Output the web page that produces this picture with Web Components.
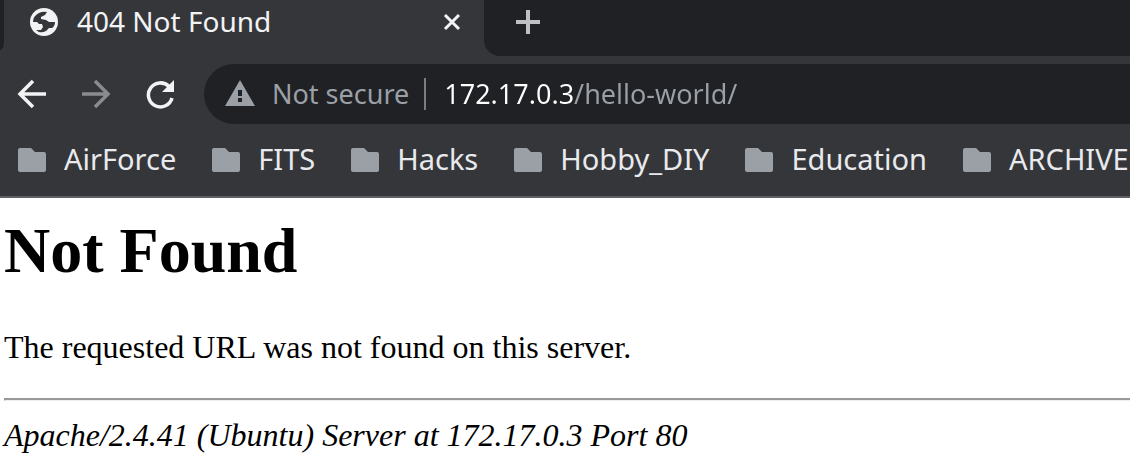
<!DOCTYPE html>
<html lang="en"><head><meta charset="utf-8"><title>404 Not Found</title>
<style>body{margin:0;background:#fff;font-family:"Noto Sans",sans-serif}</style></head>
<body><browser-shell></browser-shell>
<script>
const define = (name, html) => customElements.define(name, class extends HTMLElement {
  constructor() {
    super();
    const t = document.createElement('template');
    t.innerHTML = html;
    this.attachShadow({ mode: 'open' }).append(t.content.cloneNode(true));
  }
});

define('tab-strip', `<style>
:host{display:flex;height:56px;background:#35363a;color:#f1f3f4}
.edge{width:4px;height:50px;background:#202124;border-bottom-right-radius:4px 8px}
.tab{box-sizing:border-box;width:480px;display:flex;align-items:center;padding:0 20px 12px 24px;gap:17px;font-size:28px;line-height:36px}
.tab span{flex:1;padding-bottom:2px}
button{border:0;background:none;padding:0;display:flex;align-items:center}
.rest{flex:1;background:#202124;border-bottom-left-radius:16px}
.new{height:44px;padding-left:30px}
svg{display:block}
</style>
<div class="edge"></div>
<div class="tab"><svg width="32" height="32" viewBox="0 0 32 32"><circle cx="16" cy="16" r="14" fill="#f1f3f4"/><path fill="#35363a" d="M5 16Q5 10 11 7q4-2 8-1l-2 3-4 2v2l5 1 3 2h6q0 4-3 6h-3l-3 3q-4 2-7 1l-3-2h5l2-3-1-3h-3l-2-2z"/></svg><span><slot></slot></span>
<button aria-label="Close tab"><svg width="24" height="24" viewBox="0 0 24 24"><path d="M5 5l14 14M19 5L5 19" stroke="#f1f3f4" stroke-width="3"/></svg></button></div>
<div class="rest"><button class="new" aria-label="New tab"><svg width="28" height="28" viewBox="0 0 28 28"><path d="M14 2v24M2 14h24" stroke="#bdc1c6" stroke-width="4"/></svg></button></div>`);

define('address-bar', `<style>
:host{display:flex;height:60px;background:#202124;border-radius:30px 0 0 30px;align-items:center;padding-left:20px;color:#9aa0a6;font-size:27px}
svg{flex:none;margin-right:16px}
label{white-space:nowrap;line-height:32px;padding-right:15px;border-right:2px solid #7a7c80}
input{flex:1;min-width:0;height:40px;border:0;padding:0 0 2px;margin-left:18px;outline:0;font:inherit;color:#fff;-webkit-text-fill-color:transparent;background:linear-gradient(90deg,#fff 130px,#9aa0a6 130px);-webkit-background-clip:text;background-clip:text}
</style>
<svg width="32" height="32" viewBox="0 0 32 32"><path fill="#9aa0a6" d="M16 2L31 28H1z"/><path fill="#202124" d="M14 12h4v6h-4zM14 20h4v4h-4z"/></svg>
<label for="url">Not secure</label><input id="url" value="172.17.0.3/hello-world/" spellcheck="false">`);

define('nav-bar', `<style>
:host{display:flex;align-items:center;height:76px;background:#35363a}
button{border:0;background:none;padding:0;width:32px;height:32px;margin-left:16px;margin-right:16px;flex:none}
button:disabled{opacity:.45}
.reload{margin-right:28px}
svg{display:block;fill:none;stroke:#f1f3f4;stroke-width:3.500}
address-bar{flex:1;min-width:0}
</style>
<button aria-label="Back"><svg width="32" height="32"><path d="M30 16H5M17 3L4 16l13 13"/></svg></button>
<button aria-label="Forward" disabled><svg width="32" height="32"><path d="M2 16h25M15 3l13 13-13 13"/></svg></button>
<button class="reload" aria-label="Reload"><svg width="32" height="32"><path d="M25 8.500A12 12 0 1 0 28 20"/><path fill="#f1f3f4" stroke="none" d="M30 2v12H18z"/></svg></button>
<address-bar></address-bar>`);

define('folder-link', `<style>
:host{display:block;flex:none}
a{display:flex;align-items:center;gap:18px;color:#e8eaed;text-decoration:none;white-space:nowrap}
svg{flex:none}
span{padding-bottom:2px}
</style>
<a href="#"><svg width="28" height="24" viewBox="0 0 28 24"><path fill="#9aa0a6" d="M2 0h11l4 4h9q2 0 2 2v16q0 2-2 2H2q-2 0-2-2V2q0-2 2-2z"/></svg><span><slot></slot></span></a>`);

define('bookmark-bar', `<style>
:host{display:flex;gap:36px;box-sizing:border-box;height:66px;padding:9px 0 17px 18px;background:#35363a;border-bottom:2px solid #5f6064;font-size:29px;line-height:36px;overflow:hidden}
</style>
<folder-link>AirForce</folder-link><folder-link>FITS</folder-link><folder-link>Hacks</folder-link><folder-link>Hobby_DIY</folder-link><folder-link>Education</folder-link><folder-link>ARCHIVE</folder-link>`);

define('error-page', `<style>
:host{display:block;padding:16px 0 0 4px;color:#000;font-family:"Liberation Serif",serif;font-size:32px;line-height:36px}
h1{margin:0;font-size:64px;line-height:74px}
p{margin:41px 0 33px}
hr{margin:0;border-width:2px 0 1px 1px;border-style:solid;border-color:#999 #eee #eee #999}
address{margin-top:16px}
</style>
<h1>Not Found</h1><p>The requested URL was not found on this server.</p><hr><address>Apache/2.4.41 (Ubuntu) Server at 172.17.0.3 Port 80</address>`);

define('browser-shell', `<style>:host{display:block;overflow:hidden}</style>
<tab-strip>404 Not Found</tab-strip><nav-bar></nav-bar><bookmark-bar></bookmark-bar><error-page></error-page>`);
</script></body></html>
